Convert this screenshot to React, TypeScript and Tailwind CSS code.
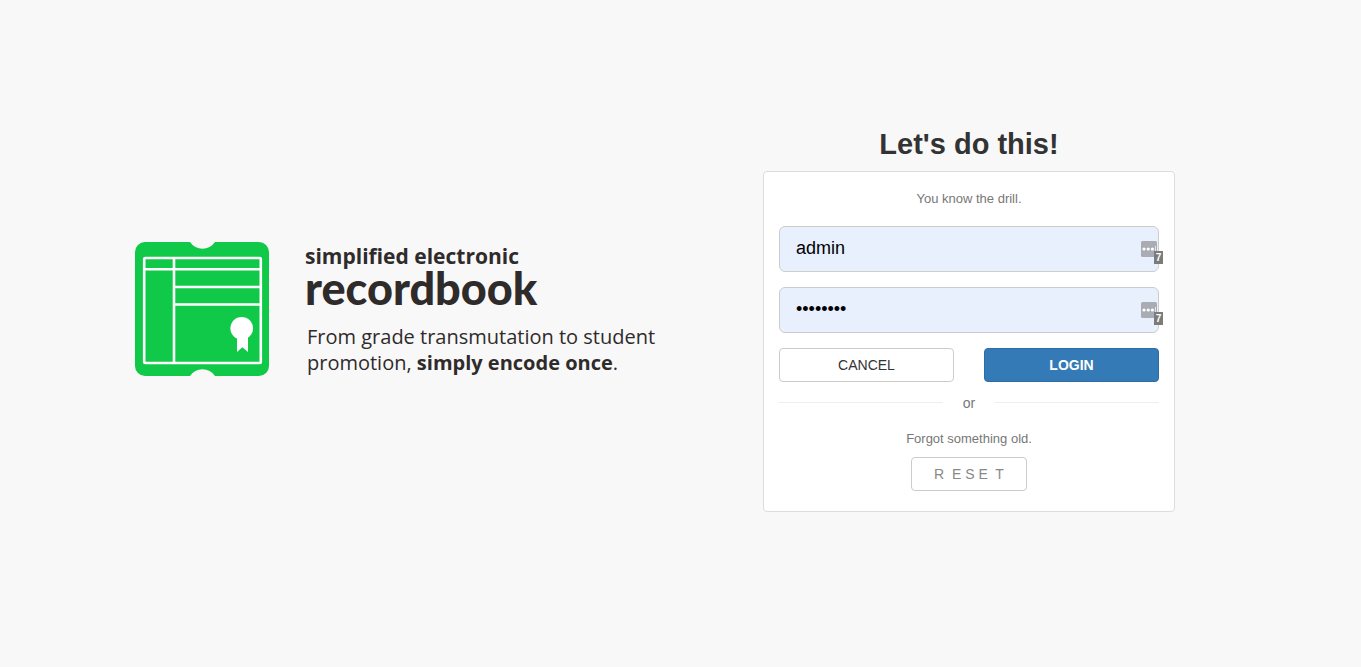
import type { InputHTMLAttributes } from "react";

function Logo() {
  return (
    <svg width="134" height="134" viewBox="0 0 134 134" className="shrink-0" aria-hidden="true">
      <path
        fill="#10c948"
        d="M10 0H55A15 15 0 0 0 80 0H124A10 10 0 0 1 134 10V124A10 10 0 0 1 124 134H80A15 15 0 0 0 55 134H10A10 10 0 0 1 0 124V10A10 10 0 0 1 10 0Z"
      />
      <g fill="none" stroke="#fff" strokeWidth="2.6">
        <rect x="9.2" y="16" width="116.6" height="105" rx="1" />
        <path d="M9 27.3H126M39 16V121M39 45H126M39 62.5H126" />
      </g>
      <g fill="#fff">
        <circle cx="106.7" cy="86.2" r="11.3" />
        <path d="M102 94H113V110L107.4 105.3L102 110Z" />
      </g>
    </svg>
  );
}

function Brand() {
  return (
    <section className="flex items-center gap-9 pb-[22px] text-[#2f2b2b]">
      <Logo />
      <div className="pt-[2px] font-['Open_Sans','Noto_Sans',sans-serif]">
        <h1>
          <span className="block text-[21px] leading-6 font-bold">simplified electronic</span>
          <span className="block font-[family-name:Lato,sans-serif] text-[45px] leading-10 font-black">recordbook</span>
        </h1>
        <p className="mt-4 pl-[2px] text-[20px] leading-[26px] whitespace-nowrap">
          From grade transmutation to student
          <br />
          promotion, <strong className="font-bold">simply encode once</strong>.
        </p>
      </div>
    </section>
  );
}

function Field({ label, ...props }: InputHTMLAttributes<HTMLInputElement> & { label: string }) {
  return (
    <div className="relative">
      <input
        aria-label={label}
        className="block h-[46px] w-full rounded-md border border-[#ccc] bg-[#e8f0fe] px-4 text-lg text-black outline-none"
        {...props}
      />
      <svg className="absolute top-[15px] right-[2px]" width="16" height="16" viewBox="0 0 16 16" aria-hidden="true">
        <rect width="16" height="16" rx="1.5" fill="#a9acb3" />
        <g fill="#fff">
          <circle cx="3" cy="8" r="1.6" />
          <circle cx="7.2" cy="8" r="1.6" />
          <circle cx="11.4" cy="8" r="1.6" />
          <rect x="14" y="5" width="0.7" height="6" />
        </g>
      </svg>
      <span className="absolute top-[25px] -right-1 h-[13px] w-[9px] bg-[#7b7b7b] text-center text-[10px] leading-[13px] font-bold text-white">
        7
      </span>
    </div>
  );
}

export default function App() {
  return (
    <main className="flex min-h-screen items-center justify-between bg-[#f8f8f8] pr-[186px] pb-7 pl-[135px] font-['Liberation_Sans',Arial,sans-serif] text-sm text-[#777]">
      <Brand />
      <section className="w-[412px] text-center">
        <h2 className="mb-[10px] text-[29px] leading-[33px] font-bold text-[#333]">Let's do this!</h2>
        <form className="rounded border border-[#ddd] bg-white px-[15px] pt-[17px] pb-5" onSubmit={(e) => e.preventDefault()}>
          <p className="mb-[17px] text-[13px] leading-5">You know the drill.</p>
          <div className="grid gap-[15px]">
            <Field label="Username" type="text" defaultValue="admin" autoComplete="username" />
            <Field label="Password" type="password" defaultValue="password" autoComplete="current-password" />
            <div className="grid grid-cols-2 gap-[30px]">
              <button type="button" className="h-[34px] rounded border border-[#ccc] bg-white text-[#333]">
                CANCEL
              </button>
              <button type="submit" className="h-[34px] rounded border border-[#2e6da4] bg-[#337ab7] font-bold text-white">
                LOGIN
              </button>
            </div>
          </div>
          <div className="mt-[11px] flex items-center gap-5 leading-5">
            <span className="h-px flex-1 bg-[#eee]" />
            or
            <span className="h-px flex-1 bg-[#eee]" />
          </div>
          <p className="mt-4 mb-2 text-[13px] leading-5">Forgot something old.</p>
          <button type="button" className="h-[34px] rounded border border-[#ccc] bg-white px-[22px] whitespace-pre text-[#888]">
            {"R  E S E  T"}
          </button>
        </form>
      </section>
    </main>
  );
}
